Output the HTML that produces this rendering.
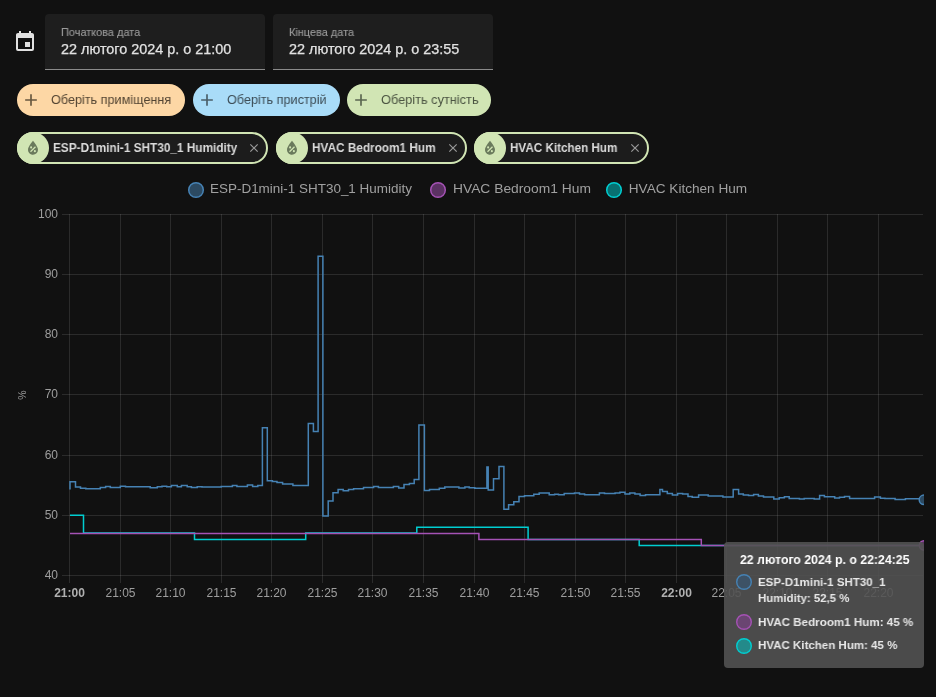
<!DOCTYPE html>
<html><head><meta charset="utf-8">
<style>
html,body{margin:0;padding:0;}
body{width:936px;height:697px;background:#111111;position:relative;overflow:hidden;font-family:"Liberation Sans",sans-serif;}
.abs{position:absolute;}
.t{will-change:transform;position:absolute;white-space:nowrap;transform-origin:0 0;line-height:1;}
.field{position:absolute;top:14px;width:220px;height:55px;background:#1e1e1e;border-radius:4px 4px 0 0;border-bottom:1px solid #8a8a8a;}
.chip{position:absolute;top:84px;height:32px;border-radius:16px;}
.echip{position:absolute;top:132px;height:28px;border:2px solid #d1e5b4;border-radius:16px;background:#1c1c1c;}
.ecirc{position:absolute;left:-2px;top:-2px;width:32px;height:32px;border-radius:16px;background:#d1e5b4;}
</style></head>
<body>
<!-- calendar icon -->
<svg class="abs" style="left:13px;top:30px" width="24" height="24" viewBox="0 0 24 24"><path fill="#e1e1e1" d="M19,19H5V8H19M16,1V3H8V1H6V3H5C3.89,3 3,3.89 3,5V19A2,2 0 0,0 5,21H19A2,2 0 0,0 21,19V5C21,3.89 20.1,3 19,3H18V1M17,12H12V17H17V12Z"/></svg>

<div class="field" style="left:45px"></div>
<div class="field" style="left:273px"></div>
<span class="t" id="lab1" style="-webkit-text-stroke:0.15px #9a9a9a;left:61px;top:26.7px;font-size:11.5px;color:#9a9a9a;transform:scaleX(0.95)">Початкова дата</span>
<span class="t" id="val1" style="-webkit-text-stroke:0.25px #e1e1e1;left:61px;top:42.1px;font-size:14.4px;color:#e1e1e1">22 лютого 2024 р. о 21:00</span>
<span class="t" id="lab2" style="-webkit-text-stroke:0.15px #9a9a9a;left:289px;top:26.7px;font-size:11.5px;color:#9a9a9a;transform:scaleX(0.95)">Кінцева дата</span>
<span class="t" id="val2" style="-webkit-text-stroke:0.25px #e1e1e1;left:289px;top:42.1px;font-size:14.4px;color:#e1e1e1">22 лютого 2024 р. о 23:55</span>

<!-- add chips -->
<div class="chip" style="left:17px;width:168px;background:#fdd7a5"></div>
<div class="chip" style="left:193px;width:147px;background:#a9dcf8"></div>
<div class="chip" style="left:347px;width:144px;background:#d1e5b4"></div>
<svg class="abs" style="left:21px;top:90px" width="20" height="20" viewBox="0 0 24 24"><path fill="#67573f" d="M19,13H13V19H11V13H5V11H11V5H13V11H19V13Z"/></svg>
<svg class="abs" style="left:197px;top:90px" width="20" height="20" viewBox="0 0 24 24"><path fill="#4a5e68" d="M19,13H13V19H11V13H5V11H11V5H13V11H19V13Z"/></svg>
<svg class="abs" style="left:351px;top:90px" width="20" height="20" viewBox="0 0 24 24"><path fill="#5a6650" d="M19,13H13V19H11V13H5V11H11V5H13V11H19V13Z"/></svg>
<span class="t" id="c1" style="left:51px;top:92.8px;font-size:13.2px;color:#524432;transform:scaleX(0.958)">Оберіть приміщення</span>
<span class="t" id="c2" style="left:227.3px;top:92.8px;font-size:13.2px;color:#3c4c55;transform:scaleX(0.958)">Оберіть пристрій</span>
<span class="t" id="c3" style="left:381px;top:92.8px;font-size:13.2px;color:#4b5442;transform:scaleX(0.968)">Оберіть сутність</span>

<!-- entity chips -->
<div class="echip" style="left:17px;width:247px"><div class="ecirc"></div></div>
<div class="echip" style="left:276px;width:187px"><div class="ecirc"></div></div>
<div class="echip" style="left:474px;width:171px"><div class="ecirc"></div></div>
<svg class="abs" style="left:23px;top:138px" width="20" height="20" viewBox="0 0 24 24"><path fill="#6a7a5c" d="M12,3.25C12,3.25 6,10 6,14C6,17.32 8.69,20 12,20A6,6 0 0,0 18,14C18,10 12,3.25 12,3.25M14.47,9.97L15.53,11.03L9.53,17.03L8.47,15.97M9.75,10A1.25,1.25 0 0,1 11,11.25A1.25,1.25 0 0,1 9.75,12.5A1.25,1.25 0 0,1 8.5,11.25A1.25,1.25 0 0,1 9.75,10M14.25,14.5A1.25,1.25 0 0,1 15.5,15.75A1.25,1.25 0 0,1 14.25,17A1.25,1.25 0 0,1 13,15.75A1.25,1.25 0 0,1 14.25,14.5Z"/></svg>
<svg class="abs" style="left:282px;top:138px" width="20" height="20" viewBox="0 0 24 24"><path fill="#6a7a5c" d="M12,3.25C12,3.25 6,10 6,14C6,17.32 8.69,20 12,20A6,6 0 0,0 18,14C18,10 12,3.25 12,3.25M14.47,9.97L15.53,11.03L9.53,17.03L8.47,15.97M9.75,10A1.25,1.25 0 0,1 11,11.25A1.25,1.25 0 0,1 9.75,12.5A1.25,1.25 0 0,1 8.5,11.25A1.25,1.25 0 0,1 9.75,10M14.25,14.5A1.25,1.25 0 0,1 15.5,15.75A1.25,1.25 0 0,1 14.25,17A1.25,1.25 0 0,1 13,15.75A1.25,1.25 0 0,1 14.25,14.5Z"/></svg>
<svg class="abs" style="left:480px;top:138px" width="20" height="20" viewBox="0 0 24 24"><path fill="#6a7a5c" d="M12,3.25C12,3.25 6,10 6,14C6,17.32 8.69,20 12,20A6,6 0 0,0 18,14C18,10 12,3.25 12,3.25M14.47,9.97L15.53,11.03L9.53,17.03L8.47,15.97M9.75,10A1.25,1.25 0 0,1 11,11.25A1.25,1.25 0 0,1 9.75,12.5A1.25,1.25 0 0,1 8.5,11.25A1.25,1.25 0 0,1 9.75,10M14.25,14.5A1.25,1.25 0 0,1 15.5,15.75A1.25,1.25 0 0,1 14.25,17A1.25,1.25 0 0,1 13,15.75A1.25,1.25 0 0,1 14.25,14.5Z"/></svg>
<span class="t" id="e1" style="left:53.2px;top:142.1px;font-size:12.5px;font-weight:bold;color:#dcdcdc;transform:scaleX(0.944)">ESP-D1mini-1 SHT30_1 Humidity</span>
<span class="t" id="e2" style="left:312.2px;top:142.1px;font-size:12.5px;font-weight:bold;color:#dcdcdc;transform:scaleX(0.943)">HVAC Bedroom1 Hum</span>
<span class="t" id="e3" style="left:510.2px;top:142.1px;font-size:12.5px;font-weight:bold;color:#dcdcdc;transform:scaleX(0.933)">HVAC Kitchen Hum</span>
<svg class="abs" style="left:247px;top:141px" width="14" height="14" viewBox="0 0 24 24"><path fill="#9a9a9a" d="M19,6.41L17.59,5L12,10.59L6.41,5L5,6.41L10.59,12L5,17.59L6.41,19L12,13.41L17.59,19L19,17.59L13.41,12L19,6.41Z"/></svg>
<svg class="abs" style="left:445.75px;top:141px" width="14" height="14" viewBox="0 0 24 24"><path fill="#9a9a9a" d="M19,6.41L17.59,5L12,10.59L6.41,5L5,6.41L10.59,12L5,17.59L6.41,19L12,13.41L17.59,19L19,17.59L13.41,12L19,6.41Z"/></svg>
<svg class="abs" style="left:628px;top:141px" width="14" height="14" viewBox="0 0 24 24"><path fill="#9a9a9a" d="M19,6.41L17.59,5L12,10.59L6.41,5L5,6.41L10.59,12L5,17.59L6.41,19L12,13.41L17.59,19L19,17.59L13.41,12L19,6.41Z"/></svg>

<!-- legend -->
<svg class="abs" style="left:0;top:0" width="936" height="697">
<circle cx="196" cy="190" r="7.3" fill="#2c4a62" stroke="#4682b4" stroke-width="1.5"/>
<circle cx="438" cy="190" r="7.3" fill="#5b3263" stroke="#a552b5" stroke-width="1.5"/>
<circle cx="614" cy="190" r="7.3" fill="#087071" stroke="#00ced1" stroke-width="1.5"/>
</svg>
<span class="t" id="l1" style="will-change:auto;left:210.4px;top:181.5px;font-size:13.6px;color:#a0a0a0;transform:scaleX(0.99)">ESP-D1mini-1 SHT30_1 Humidity</span>
<span class="t" id="l2" style="will-change:auto;left:452.8px;top:181.5px;font-size:13.6px;color:#a0a0a0;transform:scaleX(1.016)">HVAC Bedroom1 Hum</span>
<span class="t" id="l3" style="will-change:auto;left:628.8px;top:181.5px;font-size:13.6px;color:#a0a0a0">HVAC Kitchen Hum</span>

<!-- CHART -->
<svg id="chart" class="abs" style="will-change:transform;left:0;top:0;font-family:'Liberation Sans',sans-serif" width="936" height="697">
<line x1="62" y1="214.5" x2="923" y2="214.5" stroke="rgba(255,255,255,0.11)" stroke-width="1"/>
<line x1="62" y1="274.5" x2="923" y2="274.5" stroke="rgba(255,255,255,0.11)" stroke-width="1"/>
<line x1="62" y1="334.5" x2="923" y2="334.5" stroke="rgba(255,255,255,0.11)" stroke-width="1"/>
<line x1="62" y1="394.5" x2="923" y2="394.5" stroke="rgba(255,255,255,0.11)" stroke-width="1"/>
<line x1="62" y1="455.5" x2="923" y2="455.5" stroke="rgba(255,255,255,0.11)" stroke-width="1"/>
<line x1="62" y1="515.5" x2="923" y2="515.5" stroke="rgba(255,255,255,0.11)" stroke-width="1"/>
<line x1="62" y1="575.5" x2="923" y2="575.5" stroke="rgba(255,255,255,0.11)" stroke-width="1"/>
<line x1="69.5" y1="214" x2="69.5" y2="583" stroke="rgba(255,255,255,0.11)" stroke-width="1"/>
<line x1="120.5" y1="214" x2="120.5" y2="583" stroke="rgba(255,255,255,0.11)" stroke-width="1"/>
<line x1="170.5" y1="214" x2="170.5" y2="583" stroke="rgba(255,255,255,0.11)" stroke-width="1"/>
<line x1="221.5" y1="214" x2="221.5" y2="583" stroke="rgba(255,255,255,0.11)" stroke-width="1"/>
<line x1="271.5" y1="214" x2="271.5" y2="583" stroke="rgba(255,255,255,0.11)" stroke-width="1"/>
<line x1="322.5" y1="214" x2="322.5" y2="583" stroke="rgba(255,255,255,0.11)" stroke-width="1"/>
<line x1="372.5" y1="214" x2="372.5" y2="583" stroke="rgba(255,255,255,0.11)" stroke-width="1"/>
<line x1="423.5" y1="214" x2="423.5" y2="583" stroke="rgba(255,255,255,0.11)" stroke-width="1"/>
<line x1="474.5" y1="214" x2="474.5" y2="583" stroke="rgba(255,255,255,0.11)" stroke-width="1"/>
<line x1="524.5" y1="214" x2="524.5" y2="583" stroke="rgba(255,255,255,0.11)" stroke-width="1"/>
<line x1="575.5" y1="214" x2="575.5" y2="583" stroke="rgba(255,255,255,0.11)" stroke-width="1"/>
<line x1="625.5" y1="214" x2="625.5" y2="583" stroke="rgba(255,255,255,0.11)" stroke-width="1"/>
<line x1="676.5" y1="214" x2="676.5" y2="583" stroke="rgba(255,255,255,0.11)" stroke-width="1"/>
<line x1="726.5" y1="214" x2="726.5" y2="583" stroke="rgba(255,255,255,0.11)" stroke-width="1"/>
<line x1="777.5" y1="214" x2="777.5" y2="583" stroke="rgba(255,255,255,0.11)" stroke-width="1"/>
<line x1="827.5" y1="214" x2="827.5" y2="583" stroke="rgba(255,255,255,0.11)" stroke-width="1"/>
<line x1="878.5" y1="214" x2="878.5" y2="583" stroke="rgba(255,255,255,0.11)" stroke-width="1"/>
<text x="58" y="217.8" text-anchor="end" font-size="12" fill="#9e9e9e">100</text>
<text x="58" y="277.8" text-anchor="end" font-size="12" fill="#9e9e9e">90</text>
<text x="58" y="337.8" text-anchor="end" font-size="12" fill="#9e9e9e">80</text>
<text x="58" y="397.8" text-anchor="end" font-size="12" fill="#9e9e9e">70</text>
<text x="58" y="458.8" text-anchor="end" font-size="12" fill="#9e9e9e">60</text>
<text x="58" y="518.8" text-anchor="end" font-size="12" fill="#9e9e9e">50</text>
<text x="58" y="578.8" text-anchor="end" font-size="12" fill="#9e9e9e">40</text>
<text x="69.5" y="597" text-anchor="middle" font-size="12" fill="#b0b0b0" font-weight="bold">21:00</text>
<text x="120.5" y="597" text-anchor="middle" font-size="12" fill="#9e9e9e">21:05</text>
<text x="170.5" y="597" text-anchor="middle" font-size="12" fill="#9e9e9e">21:10</text>
<text x="221.5" y="597" text-anchor="middle" font-size="12" fill="#9e9e9e">21:15</text>
<text x="271.5" y="597" text-anchor="middle" font-size="12" fill="#9e9e9e">21:20</text>
<text x="322.5" y="597" text-anchor="middle" font-size="12" fill="#9e9e9e">21:25</text>
<text x="372.5" y="597" text-anchor="middle" font-size="12" fill="#9e9e9e">21:30</text>
<text x="423.5" y="597" text-anchor="middle" font-size="12" fill="#9e9e9e">21:35</text>
<text x="474.5" y="597" text-anchor="middle" font-size="12" fill="#9e9e9e">21:40</text>
<text x="524.5" y="597" text-anchor="middle" font-size="12" fill="#9e9e9e">21:45</text>
<text x="575.5" y="597" text-anchor="middle" font-size="12" fill="#9e9e9e">21:50</text>
<text x="625.5" y="597" text-anchor="middle" font-size="12" fill="#9e9e9e">21:55</text>
<text x="676.5" y="597" text-anchor="middle" font-size="12" fill="#b0b0b0" font-weight="bold">22:00</text>
<text x="726.5" y="597" text-anchor="middle" font-size="12" fill="#9e9e9e">22:05</text>
<text x="777.5" y="597" text-anchor="middle" font-size="12" fill="#9e9e9e">22:10</text>
<text x="827.5" y="597" text-anchor="middle" font-size="12" fill="#9e9e9e">22:15</text>
<text x="878.5" y="597" text-anchor="middle" font-size="12" fill="#9e9e9e">22:20</text>
<text x="0" y="0" transform="translate(26.3,395) rotate(-90)" text-anchor="middle" font-size="10.5" fill="#9e9e9e">%</text>
<path d="M70 489.5H70V481.7H75.5V487H80.5V488.2H85.8V488.8H100.3V487.6H105.6V486.6H110.3V487.4H120.3V486.2H125.5V486.8H150.2V487.8H157.3V486.8H162V486.2H166.7V486.8H171.4V485.6H177.3V486.8H181.4V485.6H187.2V486.8H191.4V487.6H197.2V486.8H202V487H221.2V486.4H232.4V485.6H236.9V486.4H247.4V485H252.6V486.4H257.8V485.6H262.4V427.8H267.3V480.7H272.4V481.5H277V482.5H282.6V484H292.9V485.5H308.3V423.4H313.4V431.6H318.1V256.3H322.9V515.9H328.2V501H333V492.8H338.1V489.6H343.2V490.8H348.5V489.6H353.6V488.7H363.5V487.6H373.6V486.6H378.4V487.6H393.4V486.6H398.7V488.1H404V484.6H409.4V483.4H414.2V479.6H418.9V425H424.4V490.6H429.5V489.4H439.3V488.2H444.8V487H458.9V487.9H464.9V486.9H469.2V487.8H474.8V488.2H486.9V467H488.2V489.9H493.5V478.7H499V466.6H503.9V509.3H508.6V504.7H513.8V501.7H519V496.6H524.5V495.8H533.8V494.2H539.2V492.9H549.2V494.8H554.6V494.2H558.5V494.8H564.2V493.5H574.5V492.9H579.5V494.1H584.6V494.8H599.4V492.9H604.5V493.5H615.1V492.9H619.9V492.3H625V494.1H629.8V492.9H634.9V493.9H640.1V495.5H645.5V494.7H659.9V489.6H662.5V491.6H667.3V493.5H672.4V495.1H677.6V493.5H682.6V494.1H688V496.6H692.2V497.3H698.6V495H708.2V496H722.9V496.9H733.2V489.6H738.6V493.9H743.3V494.9H748.5V495.5H753.6V494.6H758.4V496.1H763.5V497.1H773.8V499.1H779.2V497.8H784.4V496.7H789.2V498.4H799.4V499.1H804.2V498.4H814.2V499.1H819.6V495.5H824.4V496.8H834.7V498.1H839.5V497.2H844.5V496.6H849.6V498.5H874.6V496.9H880.4V498.3H884.9V498.6H895.1V499.5H905.4V498.7H924" fill="none" stroke="#4682b4" stroke-width="1.5" stroke-linejoin="miter"/>
<path d="M70 515.3H83.5V533.1H194.5V539.4H305.7V533.1H416.8V527.3H528.1V539.4H639.2V545.4H924" fill="none" stroke="#00ced1" stroke-width="1.5"/>
<path d="M70 533.4H478.9V539.4H701.3V545.4H924" fill="none" stroke="#a552b5" stroke-width="1.5"/>
<defs><clipPath id="cp"><rect x="60" y="200" width="864" height="400"/></clipPath></defs><g clip-path="url(#cp)"><circle cx="924" cy="499.8" r="4.8" fill="#2c4a62" stroke="#4682b4" stroke-width="1.5"/>
<circle cx="924" cy="545.4" r="4.6" fill="#5b3263" stroke="#a552b5" stroke-width="1.5"/></g>
</svg>


<!-- tooltip -->
<div class="abs" style="left:724px;top:542px;width:200px;height:125.5px;background:rgba(82,82,82,0.9);border-radius:4px;"></div>
<svg class="abs" style="left:0;top:0" width="936" height="697">
<circle cx="744" cy="582" r="7.3" fill="#3d5266" stroke="#4682b4" stroke-width="1.4"/>
<circle cx="744" cy="622" r="7.3" fill="#6a4572" stroke="#a552b5" stroke-width="1.4"/>
<circle cx="744" cy="646" r="7.3" fill="#238a8a" stroke="#00ced1" stroke-width="1.4"/>
</svg>
<span class="t" id="tt" style="left:739.7px;top:554.3px;font-size:12.8px;font-weight:bold;color:#ffffff;transform:scaleX(0.96)">22 лютого 2024 р. о 22:24:25</span>
<span class="t" id="ti1" style="left:758.1px;top:577.1px;font-size:11.8px;font-weight:bold;color:#e8e8e8;transform:scaleX(0.977)">ESP-D1mini-1 SHT30_1</span>
<span class="t" id="ti2" style="left:758.1px;top:592.5px;font-size:11.8px;font-weight:bold;color:#e8e8e8;transform:scaleX(0.968)">Humidity: 52,5 %</span>
<span class="t" id="ti3" style="left:758.1px;top:616.6px;font-size:11.8px;font-weight:bold;color:#e8e8e8;transform:scaleX(0.984)">HVAC Bedroom1 Hum: 45 %</span>
<span class="t" id="ti4" style="left:758.1px;top:640.2px;font-size:11.8px;font-weight:bold;color:#e8e8e8;transform:scaleX(0.977)">HVAC Kitchen Hum: 45 %</span>

</body></html>
